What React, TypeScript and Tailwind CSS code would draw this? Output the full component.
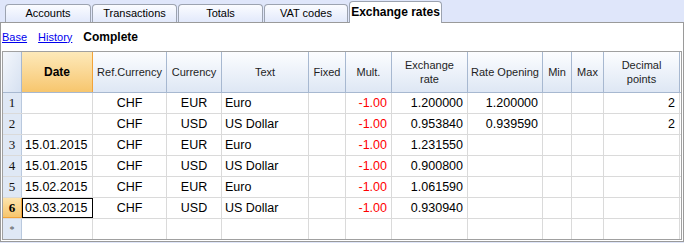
import React from "react";

type Align = "left" | "center" | "right";

interface Column {
  label: string[];
  width: string;
  align: Align;
  red?: boolean;
  active?: boolean;
}

const columns: Column[] = [
  { label: ["Date"], width: "w-[71px]", align: "left", active: true },
  { label: ["Ref.Currency"], width: "w-[74px]", align: "center" },
  { label: ["Currency"], width: "w-[55px]", align: "center" },
  { label: ["Text"], width: "w-[87px]", align: "left" },
  { label: ["Fixed"], width: "w-[37px]", align: "center" },
  { label: ["Mult."], width: "w-[46px]", align: "right", red: true },
  { label: ["Exchange", "rate"], width: "w-[76px]", align: "right" },
  { label: ["Rate Opening"], width: "w-[75px]", align: "right" },
  { label: ["Min"], width: "w-[29px]", align: "right" },
  { label: ["Max"], width: "w-[32px]", align: "right" },
  { label: ["Decimal", "points"], width: "w-[76px]", align: "right" },
];

const rows: string[][] = [
  ["", "CHF", "EUR", "Euro", "", "-1.00", "1.200000", "1.200000", "", "", "2"],
  ["", "CHF", "USD", "US Dollar", "", "-1.00", "0.953840", "0.939590", "", "", "2"],
  ["15.01.2015", "CHF", "EUR", "Euro", "", "-1.00", "1.231550", "", "", "", ""],
  ["15.01.2015", "CHF", "USD", "US Dollar", "", "-1.00", "0.900800", "", "", "", ""],
  ["15.02.2015", "CHF", "EUR", "Euro", "", "-1.00", "1.061590", "", "", "", ""],
  ["03.03.2015", "CHF", "USD", "US Dollar", "", "-1.00", "0.930940", "", "", "", ""],
  ["", "", "", "", "", "", "", "", "", "", ""],
];

const tabs = [
  { name: "Accounts", cls: "ml-[5px] w-[86px]" },
  { name: "Transactions", cls: "ml-[1px] w-[85px]" },
  { name: "Totals", cls: "ml-[1px] w-[85px]" },
  { name: "VAT codes", cls: "ml-[1px] w-[84px]" },
];

const alignCls: Record<Align, string> = {
  left: "justify-start pl-[3px]",
  center: "justify-center",
  right: "justify-end pr-[4px]",
};

function Tabs() {
  return (
    <div className="flex h-[22px] items-end">
      {tabs.map((t) => (
        <div
          key={t.name}
          className={`${t.cls} flex h-[18px] items-center justify-center rounded-t-[4px] border border-b-0 border-[#9ca3b0] bg-gradient-to-b from-[#fbfcff] to-[#e2e9fb] text-[11px] text-black`}
        >
          {t.name}
        </div>
      ))}
      <div className="relative z-10 -mb-px ml-[1px] flex h-[22px] w-[93px] items-center justify-center rounded-t-[4px] border border-b-0 border-[#9ca3b0] bg-white pb-[2px] text-[12px] font-bold text-black">
        Exchange rates
      </div>
    </div>
  );
}

function HeaderRow() {
  return (
    <div className="flex h-[41px] border-b border-[#a7b8d0]">
      <div className="w-[19px] border-r border-[#a7b8d0] bg-gradient-to-br from-[#f4f7fc] to-[#d6e1f1]" />
      {columns.map((c, i) => (
        <div
          key={i}
          className={
            c.active
              ? `${c.width} flex flex-col items-center justify-center border-r border-[#f2a33a] bg-gradient-to-b from-[#fde9b9] to-[#f7c66d] text-[12px] font-bold leading-[14px] text-black`
              : `${c.width} flex flex-col items-center justify-center border-r border-[#a7b8d0] bg-gradient-to-b from-[#fcfdff] to-[#dee7f4] text-[11px] leading-[14px] text-[#1e1e1e]`
          }
        >
          {c.label.map((l) => (
            <span key={l} className="whitespace-nowrap">
              {l}
            </span>
          ))}
        </div>
      ))}
    </div>
  );
}

function DataRow({ cells, index, last }: { cells: string[]; index: number; last: boolean }) {
  const current = index === 5;
  return (
    <div className={last ? "flex h-[20px]" : "flex h-[21px] border-b border-[#dadada]"}>
      <div
        className={
          current
            ? "flex w-[19px] items-center justify-center border-r border-b border-[#f2a33a] bg-gradient-to-b from-[#fde3ab] to-[#f7c66d] font-['Liberation_Serif',serif] text-[13px] font-bold text-black"
            : "flex w-[19px] items-center justify-center border-r border-[#b9c9de] bg-[#dfe8f5] font-['Liberation_Serif',serif] text-[13px] text-[#111]"
        }
      >
        {last ? <span className="text-[10px] text-[#555]">*</span> : index + 1}
      </div>
      {columns.map((c, i) => (
        <div
          key={i}
          className={`${c.width} ${alignCls[c.align]} flex items-center border-r border-[#dadada] text-[12.5px] ${
            c.red ? "text-[#ff0000]" : "text-black"
          } ${current && i === 0 ? "outline outline-1 -outline-offset-1 outline-black" : ""}`}
        >
          {cells[i]}
        </div>
      ))}
    </div>
  );
}

export default function App() {
  return (
    <div className="h-[243px] w-[684px] overflow-hidden bg-[#dfe6fa] font-['Liberation_Sans',Arial,sans-serif]">
      <Tabs />
      <div className="h-[220px] w-[684px] border border-[#9a9a9a] bg-white">
        <div className="flex h-[28px] items-center pl-[1px] text-[11px]">
          <span className="text-[#0000ee] underline">Base</span>
          <span className="ml-[11px] text-[#0000ee] underline">History</span>
          <span className="ml-[11px] text-[12px] font-bold text-black">Complete</span>
        </div>
        <div className="ml-[1px] h-[189px] w-[680px] border border-[#a0a0a0] bg-white">
          <HeaderRow />
          {rows.map((r, i) => (
            <DataRow key={i} cells={r} index={i} last={i === rows.length - 1} />
          ))}
        </div>
      </div>
    </div>
  );
}
